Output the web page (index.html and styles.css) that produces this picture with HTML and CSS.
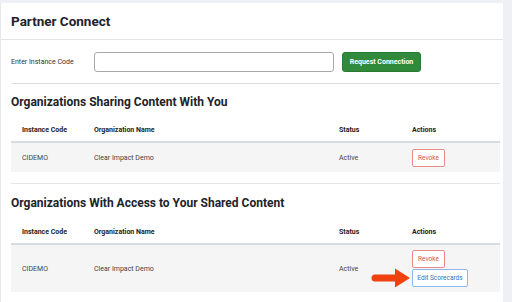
FILE: index.html
```html
<html>
  <head>
    <link rel="stylesheet" href="styles.css">
  </head>
  <body>
    <div class="card">
      <div class="card-header">
        <h1>Partner Connect</h1>
      </div>
      <div class="card-body">
        <div class="request-row">
          <label for="code">Enter Instance Code</label>
          <input id="code" type="text">
          <button class="btn-green">Request Connection</button>
        </div>

        <div class="section sharing">
          <h2>Organizations Sharing Content With You</h2>
          <table>
            <thead>
              <tr>
                <th class="c-code">Instance Code</th>
                <th class="c-name">Organization Name</th>
                <th class="c-status">Status</th>
                <th>Actions</th>
              </tr>
            </thead>
            <tbody>
              <tr>
                <td>CIDEMO</td>
                <td>Clear Impact Demo</td>
                <td>Active</td>
                <td><button class="btn-revoke">Revoke</button></td>
              </tr>
            </tbody>
          </table>
        </div>

        <div class="section access">
          <h2>Organizations With Access to Your Shared Content</h2>
          <table>
            <thead>
              <tr>
                <th class="c-code">Instance Code</th>
                <th class="c-name">Organization Name</th>
                <th class="c-status">Status</th>
                <th>Actions</th>
              </tr>
            </thead>
            <tbody>
              <tr class="tall">
                <td>CIDEMO</td>
                <td>Clear Impact Demo</td>
                <td>Active</td>
                <td>
                  <div class="actions">
                    <button class="btn-revoke">Revoke</button>
                    <span class="edit-wrap">
                      <svg class="arrow" width="42" height="20" viewBox="0 0 42 20">
                        <path d="M5 6.5 L25 6.5 L25 0.5 L40 10 L25 19.5 L25 13.5 L5 13.5 A3.5 3.5 0 0 1 5 6.5 Z" fill="#f0410f"/>
                      </svg>
                      <button class="btn-edit">Edit Scorecards</button>
                    </span>
                  </div>
                </td>
              </tr>
            </tbody>
          </table>
        </div>
      </div>
    </div>
  </body>
</html>
```

FILE: styles.css
```css
body {
  margin: 0;
  background: #eef0f5;
  font-family: Roboto, "Liberation Sans", sans-serif;
  color: #222;
}

/* card ======================================= */
.card {
  background: #fff;
  width: 503px;
  height: 299px;
  margin-top: 3px;
  border-left: 1px solid #e6e8ec;
  box-sizing: border-box;
  overflow: hidden;
}
.card-header {
  height: 36px;
  border-bottom: 1px solid #e4e4e4;
  display: flex;
  align-items: center;
  padding-left: 10px;
}
h1 {
  margin: 0;
  font-size: 13.5px;
  font-weight: 700;
  color: #1e2328;
}
.card-body {
  padding: 0 3px 0 10px;
}

/* request row ================================ */
.request-row {
  display: flex;
  align-items: center;
  height: 43px;
  border-bottom: 1px solid #dedede;
}
.request-row label {
  font-size: 7px;
  color: #333;
  width: 83px;
}
.request-row input {
  width: 240px;
  height: 20px;
  border: 1px solid #a8a8a8;
  border-radius: 3px;
  box-sizing: border-box;
  margin-right: 8px;
}
.btn-green {
  height: 20px;
  width: 79px;
  padding: 0;
  background: #2f8a3b;
  border: 1px solid #2a7c35;
  border-radius: 3px;
  color: #fff;
  font-family: inherit;
  font-size: 7px;
  font-weight: 700;
}

/* sections =================================== */
.section.sharing {
  border-bottom: 1px solid #e6e6e6;
  padding-bottom: 11px;
}
h2 {
  margin: 0;
  padding: 10px 0 8px 0;
  font-size: 12px;
  font-weight: 700;
  color: #1e2328;
  line-height: 16px;
}
.access h2 { padding: 11px 0 9px 0; }

table {
  width: 489px;
  border-collapse: collapse;
  font-size: 7px;
}
th {
  text-align: left;
  font-weight: 700;
  color: #222;
  height: 24px;
  padding: 0 0 0 11px;
  border-bottom: 2px solid #d8dbe0;
}
.c-code { width: 61px; }
.c-name { width: 234px; }
.c-status { width: 62px; }
td {
  background: #f5f5f5;
  color: #444;
  height: 30px;
  padding: 0 0 0 11px;
}
.tall td { height: 48px; }

/* buttons ==================================== */
.btn-revoke, .btn-edit {
  display: block;
  height: 18px;
  padding: 0;
  background: #fff;
  border-radius: 2px;
  font-family: inherit;
  font-size: 6.5px;
}
.btn-revoke {
  width: 33px;
  border: 1px solid #e88b8b;
  color: #d9534f;
}
.btn-edit {
  width: 56px;
  border: 1px solid #8db8ec;
  color: #3570b8;
}
.actions {
  display: flex;
  flex-direction: column;
  gap: 1px;
}
.edit-wrap {
  position: relative;
}
.arrow {
  position: absolute;
  left: -42px;
  top: -1px;
}
```
